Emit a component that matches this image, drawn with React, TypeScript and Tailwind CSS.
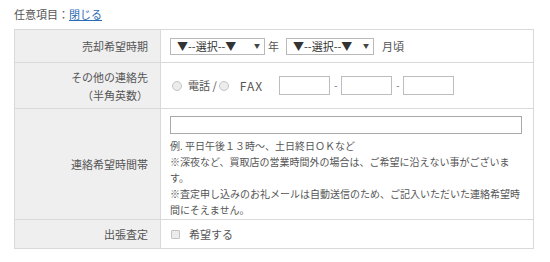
import React from "react"

const Radio = () => (
  <span className="inline-block w-[10px] h-[10px] rounded-full border border-[#c4c4c4] bg-[#ececec]"></span>
)

const FakeSelect = ({ width }: { width: string }) => (
  <div
    className={`${width} h-[17px] border border-[#b9b9b9] bg-white flex items-center pl-[6px] pr-[4px] text-[11px] text-[#333] leading-none`}
  >
    <span className="flex-1">▼--選択--▼</span>
    <span className="text-[6px] text-[#444]">▼</span>
  </div>
)

const Row = ({
  label,
  height,
  first,
  children,
}: {
  label: React.ReactNode
  height: string
  first?: boolean
  children: React.ReactNode
}) => (
  <div className={`flex ${height} ${first ? "" : "border-t border-[#d9d9d9]"}`}>
    <div className="w-[146px] shrink-0 bg-[#efefef] border-r border-[#d9d9d9] flex items-center justify-end pr-[12px] text-right text-[11px] leading-[18px]">
      {label}
    </div>
    <div className="flex-1 pl-[9px]">{children}</div>
  </div>
)

const App = () => {
  return (
    <div className="w-[550px] h-[262px] bg-white pl-[14px] text-[#555] font-['Noto_Sans_CJK_JP',sans-serif]">
      <div className="h-[29px] flex items-center text-[11px]">
        任意項目：
        <a className="text-[#2b6cb5] underline cursor-pointer">閉じる</a>
      </div>

      <div className="w-[520px] border border-[#d9d9d9]">
        <Row label="売却希望時期" height="h-[32px]" first>
          <div className="h-full flex items-center text-[11px]">
            <FakeSelect width="w-[95px]" />
            <span className="ml-[3px] mr-[7px]">年</span>
            <FakeSelect width="w-[88px]" />
            <span className="ml-[8px]">月頃</span>
          </div>
        </Row>

        <Row
          label={
            <div>
              その他の連絡先
              <br />
              （半角英数）
            </div>
          }
          height="h-[46px]"
        >
          <div className="h-full flex items-center text-[11px]">
            <span className="ml-[2px] flex">
              <Radio />
            </span>
            <span className="ml-[6px]">電話 /</span>
            <span className="ml-[2px] flex">
              <Radio />
            </span>
            <span className="ml-[11px] text-[12px] tracking-[1px]">FAX</span>
            <div className="ml-[16px] w-[51px] h-[19px] border border-[#bdbdbd] bg-white"></div>
            <span className="mx-[4px] text-[9px]">-</span>
            <div className="w-[51px] h-[19px] border border-[#bdbdbd] bg-white"></div>
            <span className="mx-[4px] text-[9px]">-</span>
            <div className="w-[51px] h-[19px] border border-[#bdbdbd] bg-white"></div>
          </div>
        </Row>

        <Row label="連絡希望時間帯" height="h-[111px]">
          <div className="pt-[7px] pr-[11px]">
            <div className="w-[352px] h-[18px] border border-[#a9a9a9] bg-white"></div>
            <div className="mt-[4px] text-[10px] leading-[16px] whitespace-nowrap">
              例. 平日午後１３時～、土日終日ＯＫなど
              <br />
              ※深夜など、買取店の営業時間外の場合は、ご希望に沿えない事がございま
              <br />
              す。
              <br />
              ※査定申し込みのお礼メールは自動送信のため、ご記入いただいた連絡希望時
              <br />
              間にそえません。
            </div>
          </div>
        </Row>

        <Row label="出張査定" height="h-[29px]">
          <div className="h-full flex items-center text-[11px]">
            <span className="ml-[1px] inline-block w-[9px] h-[9px] border border-[#c4c4c4] bg-[#ececec] rounded-[1px]"></span>
            <span className="ml-[9px]">希望する</span>
          </div>
        </Row>
      </div>
    </div>
  )
}

export default App
